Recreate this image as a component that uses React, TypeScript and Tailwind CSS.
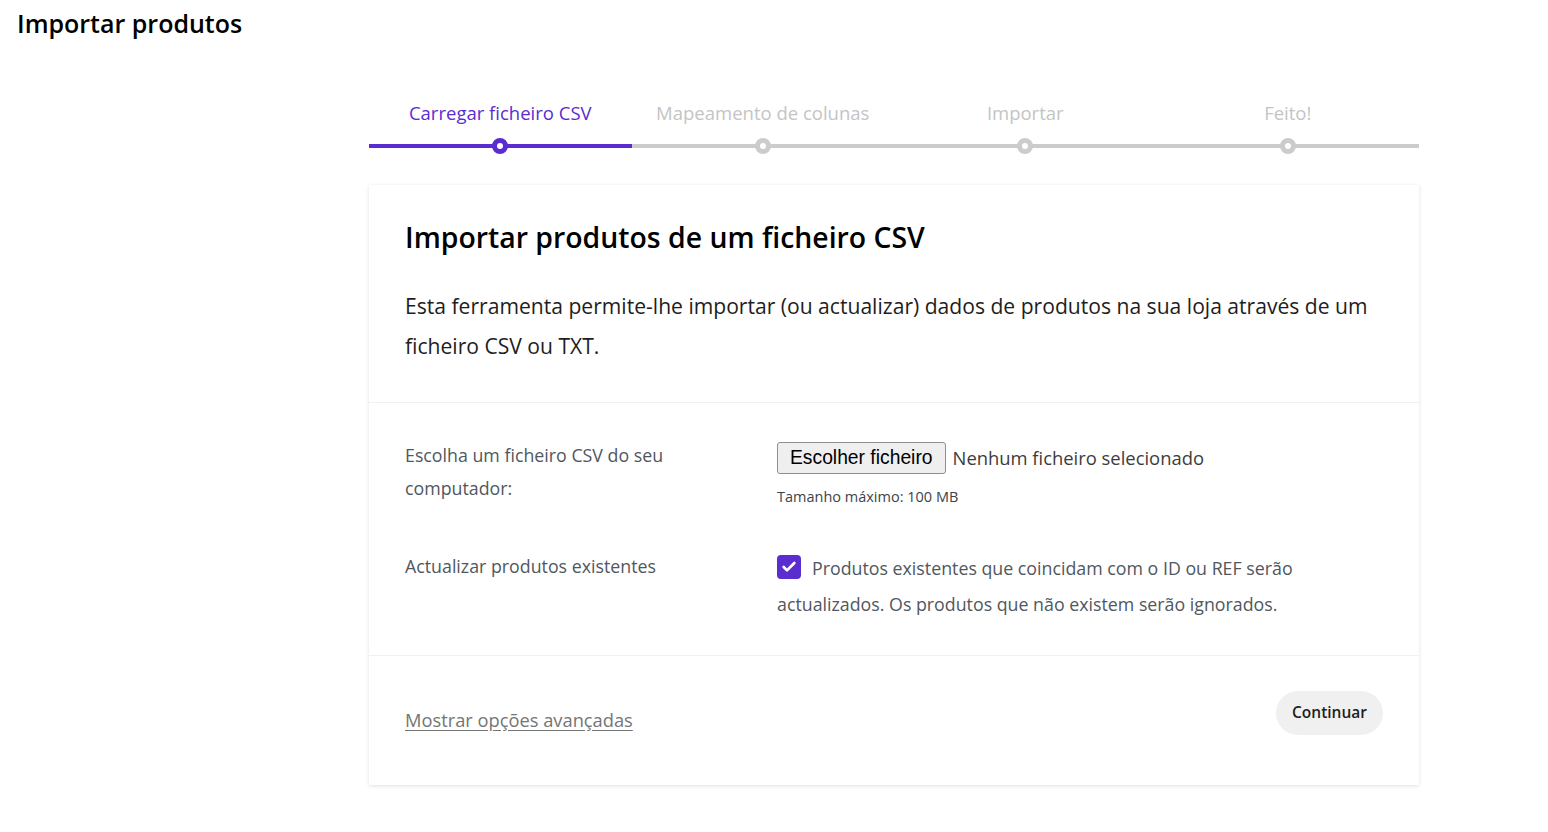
import { Check } from 'lucide-react';

const steps = ['Carregar ficheiro CSV', 'Mapeamento de colunas', 'Importar', 'Feito!'];

function Stepper() {
  return (
    <ol className="grid grid-cols-4">
      {steps.map((s, i) => {
        const active = i === 0;
        return (
          <li key={s} className="flex flex-col items-center">
            <span className={active ? 'text-[18.5px] leading-[26px] text-[#5b2dd1]' : 'text-[18.5px] leading-[26px] text-[#c4c4c4]'}>{s}</span>
            <div className="relative mt-[18px] h-[4px] w-full">
              <div className={active ? 'h-full w-full bg-[#5b2dd1]' : 'h-full w-full bg-[#cccccc]'}></div>
              <div className={active
                ? 'absolute left-1/2 top-1/2 h-[16px] w-[16px] -translate-x-1/2 -translate-y-1/2 rounded-full border-[5px] border-[#5b2dd1] bg-white'
                : 'absolute left-1/2 top-1/2 h-[16px] w-[16px] -translate-x-1/2 -translate-y-1/2 rounded-full border-[5px] border-[#cccccc] bg-white'}></div>
            </div>
          </li>
        );
      })}
    </ol>
  );
}

export default function App() {
  return (
    <div className="min-h-screen bg-white font-['Open_Sans',sans-serif] text-[#1e1e1e]">
      <h1 className="pl-[17px] pt-[5px] text-[25px] font-semibold leading-[36px] text-black">Importar produtos</h1>

      <div className="ml-[369px] mt-[59px] w-[1050px]">
        {/* Steps */}
        <Stepper />

        {/* Card */}
        <div className="mt-[37px] bg-white shadow-[0_1px_4px_rgba(0,0,0,0.12)]">
          <section className="border-b border-[#f0f0f0] px-[36px] pt-[33px] pb-[36px]">
            <h2 className="text-[28.4px] font-semibold leading-[38px] text-black">Importar produtos de um ficheiro CSV</h2>
            <p className="mt-[30px] text-[21.1px] leading-[40px] text-[#1e1e1e]">
              Esta ferramenta permite-lhe importar (ou actualizar) dados de produtos na sua loja através de um
              <br />
              ficheiro CSV ou TXT.
            </p>
          </section>

          <section className="border-b border-[#f0f0f0] px-[36px] pt-[36px] pb-[33px]">
            <div className="flex">
              <label className="w-[372px] shrink-0 pr-[80px] text-[17.8px] leading-[33px] text-[#50575e]">
                Escolha um ficheiro CSV do seu computador:
              </label>
              <div className="pt-[3px]">
                <div className="flex items-center gap-[7px]">
                  <button className="h-[32px] rounded-[3px] border border-[#8f8f8f] bg-[#efefef] px-[12px] font-['Liberation_Sans',sans-serif] text-[19.3px] text-black">
                    Escolher ficheiro
                  </button>
                  <span className="text-[18.4px] text-[#3c3c3c]">Nenhum ficheiro selecionado</span>
                </div>
                <p className="mt-[13px] text-[14.5px] leading-[20px] text-[#3c434a]">Tamanho máximo: 100 MB</p>
              </div>
            </div>

            <div className="mt-[43px] flex">
              <label className="w-[372px] shrink-0 pr-[80px] text-[17.8px] leading-[33px] text-[#50575e]">
                Actualizar produtos existentes
              </label>
              <div className="text-[17.8px] leading-[36px] text-[#50575e]">
                <span className="relative top-[5px] mr-[11px] inline-flex h-[24px] w-[24px] items-center justify-center rounded-[4px] bg-[#5b2dd1] align-top">
                  <Check className="h-[16px] w-[16px] text-white" strokeWidth={4} />
                </span>
                Produtos existentes que coincidam com o ID ou REF serão
                <br />
                actualizados. Os produtos que não existem serão ignorados.
              </div>
            </div>
          </section>

          <section className="flex items-center justify-between px-[36px] pt-[35px] pb-[50px]">
            <a href="#" className="mt-[14px] text-[18.3px] text-[#757575] underline underline-offset-[3px]">Mostrar opções avançadas</a>
            <button className="h-[44px] rounded-full bg-[#f0f0f0] px-[16px] text-[15.5px] font-semibold text-[#1e1e1e]">Continuar</button>
          </section>
        </div>
      </div>
    </div>
  );
}
